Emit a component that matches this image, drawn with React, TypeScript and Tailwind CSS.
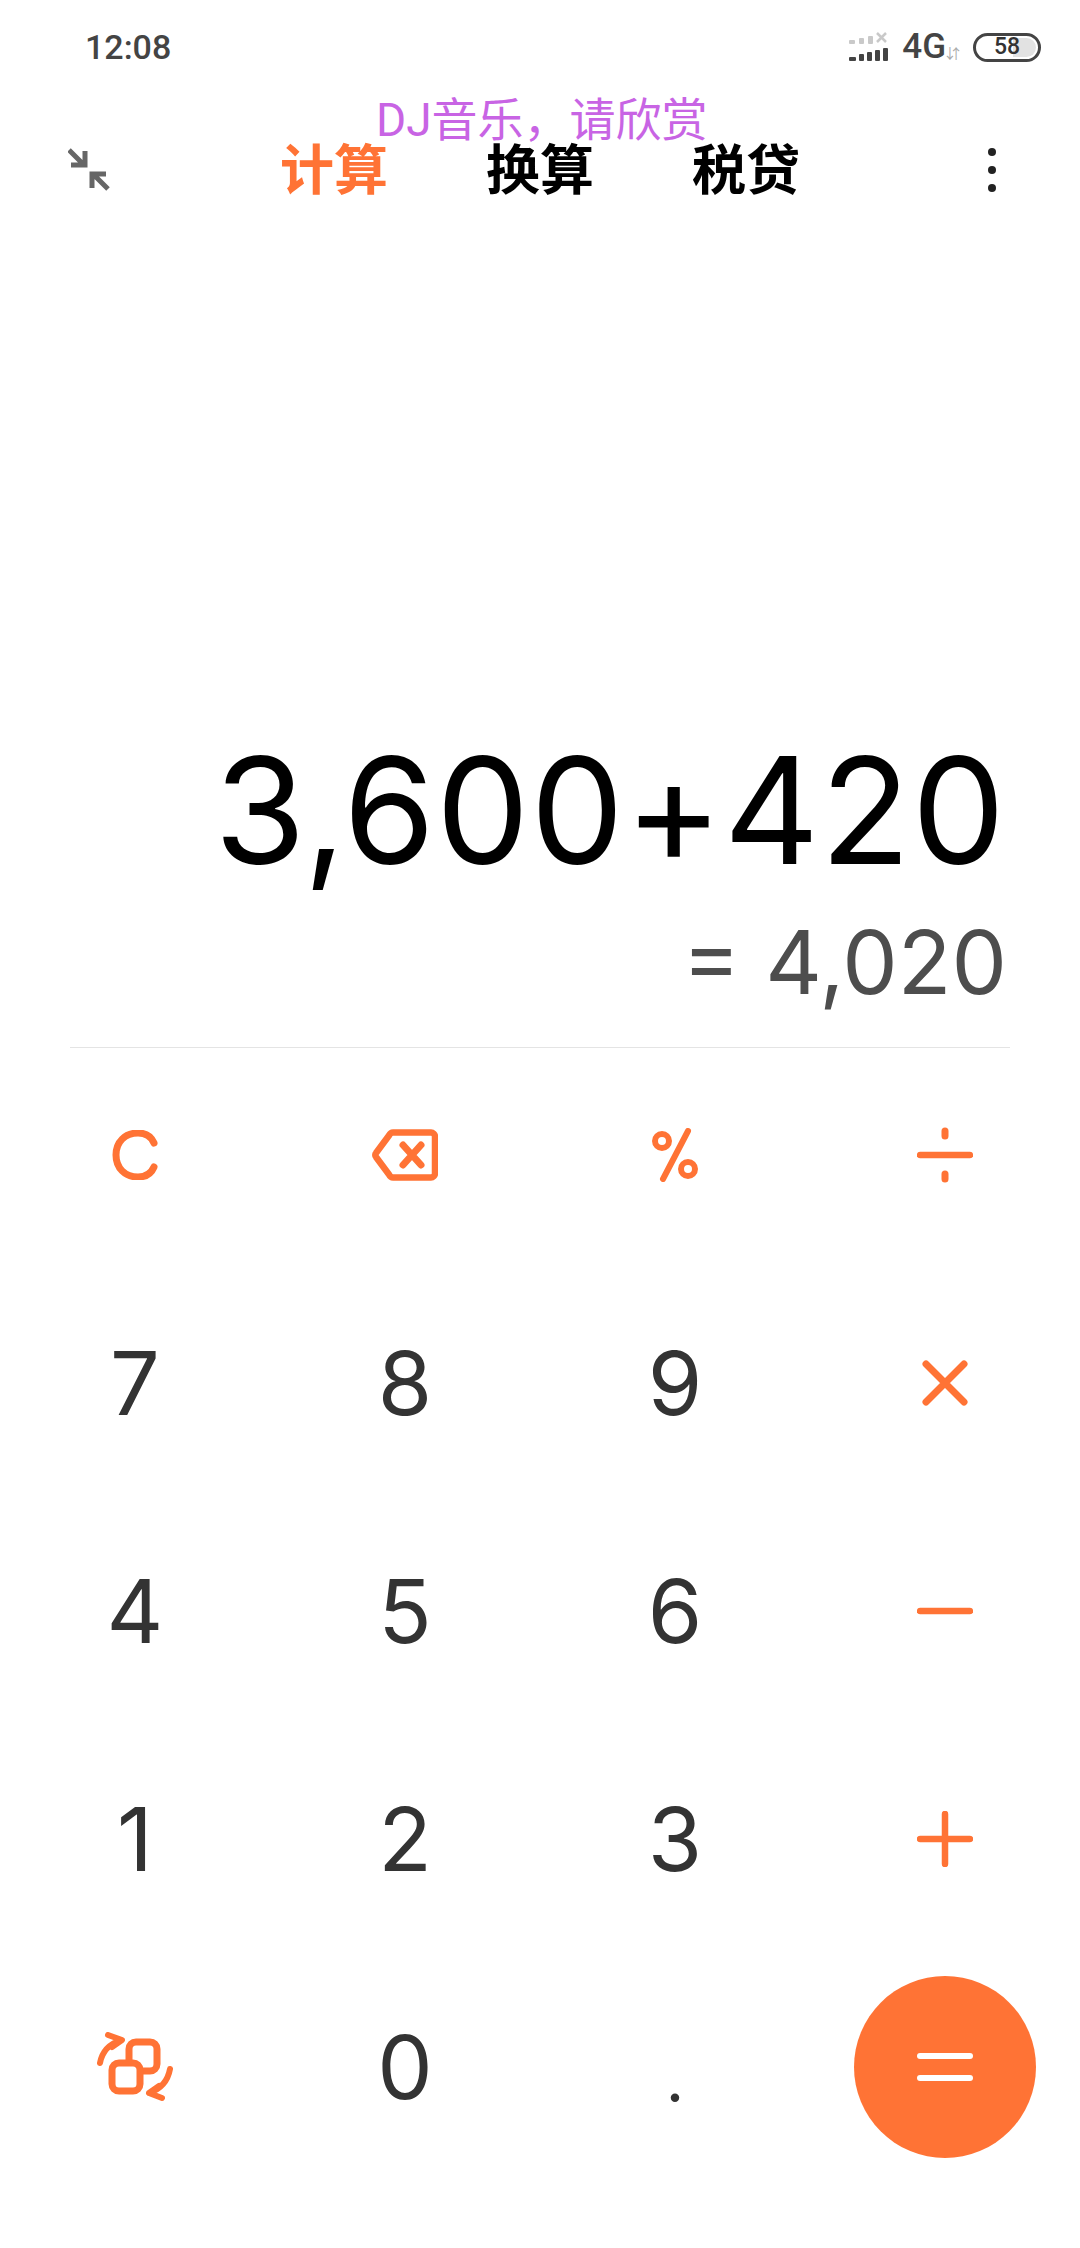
import type { ReactNode } from "react";

const ORANGE = "#ff7335";
const cjk = "font-['Roboto','Noto_Sans_CJK_SC',sans-serif]";

const Icon = ({ w, h, children }: { w: number; h: number; children: ReactNode }) => (
  <svg width={w} height={h} viewBox={`0 0 ${w} ${h}`} fill="none" stroke={ORANGE} strokeLinecap="round" strokeLinejoin="round">
    {children}
  </svg>
);

const ClearIcon = () => (
  <Icon w={46} h={50}>
    <path d="M42 13C39 6 33 3 26 3 13 3 4 12 4 25s9 22 22 22c7 0 13-3 16-10" strokeWidth={7} />
  </Icon>
);

const BackspaceIcon = () => (
  <Icon w={66} h={52}>
    <path d="M21 3.500h38c2 0 4 2 4 4v37c0 2-2 4-4 4H21c-2 0-3-1-4-3L4 28c-1-1-1-3 0-4L17 6.500c1-2 2-3 4-3z" strokeWidth={6.500} />
    <path d="M31 16l18 20M49 16L31 36" strokeWidth={7} />
  </Icon>
);

const PercentIcon = () => (
  <Icon w={46} h={54}>
    <path d="M36 3L11 51" strokeWidth={6} />
    <circle cx={10} cy={13} r={7} strokeWidth={6} />
    <circle cx={36} cy={41} r={7} strokeWidth={6} />
  </Icon>
);

const DivideIcon = () => (
  <Icon w={56} h={56}>
    <path d="M3 28h50" strokeWidth={6.500} />
    <path d="M28 4v5M28 47v5" strokeWidth={7} />
  </Icon>
);

const TimesIcon = () => (
  <Icon w={46} h={46}>
    <path d="M4 4l38 38M42 4L4 42" strokeWidth={7} />
  </Icon>
);

const MinusIcon = () => (
  <Icon w={56} h={8}>
    <path d="M3 4h50" strokeWidth={6.500} />
  </Icon>
);

const PlusIcon = () => (
  <Icon w={56} h={56}>
    <path d="M3 28h50M28 3v50" strokeWidth={6.500} />
  </Icon>
);

const SwapIcon = () => (
  <Icon w={76} h={70}>
    <rect x={32} y={10} width={28} height={29} rx={7} strokeWidth={7} />
    <rect x={15} y={31} width={28} height={28} rx={7} strokeWidth={7} fill="white" />
    <path d="M3 31C5 20 12 12 24 8M11 3l14 5-10 7" strokeWidth={6} />
    <path d="M73 37c-2 11-9 20-21 24M65 66l-13-5 10-7" strokeWidth={6} />
  </Icon>
);

const Signal = () => (
  <svg width={42} height={30} viewBox="0 0 42 30">
    <g fill="#c9c9c9">
      <rect x={1} y={8} width={6} height={4} rx={1} />
      <rect x={11} y={6} width={5} height={6} rx={1} />
      <rect x={20} y={4} width={5} height={8} rx={1} />
    </g>
    <path d="M29 1l9 9M38 1l-9 9" stroke="#c9c9c9" strokeWidth={2.500} />
    <g fill="#444">
      <rect x={1} y={25} width={7} height={4} rx={1} />
      <rect x={11} y={22} width={5} height={7} rx={1} />
      <rect x={19} y={20} width={5} height={9} rx={1} />
      <rect x={27} y={18} width={5} height={11} rx={1} />
      <rect x={35} y={16} width={5} height={13} rx={1} />
    </g>
  </svg>
);

const Digit = ({ value }: { value: string }) => (
  <span className="font-['Inter',sans-serif] text-[88px] leading-none font-normal text-[#333333]">{value}</span>
);

const keys: ReactNode[] = [
  <ClearIcon />,
  <BackspaceIcon />,
  <PercentIcon />,
  <DivideIcon />,
  <Digit value="7" />,
  <Digit value="8" />,
  <Digit value="9" />,
  <TimesIcon />,
  <Digit value="4" />,
  <Digit value="5" />,
  <Digit value="6" />,
  <MinusIcon />,
  <Digit value="1" />,
  <Digit value="2" />,
  <Digit value="3" />,
  <PlusIcon />,
  <SwapIcon />,
  <Digit value="0" />,
  <span className="font-['Inter',sans-serif] text-[64px] leading-none text-[#333333] mt-[24px]">.</span>,
  <div className="w-[182px] h-[182px] rounded-full bg-[#ff7335] flex flex-col items-center justify-center gap-4">
    <div className="w-14 h-1.5 rounded-sm bg-white" />
    <div className="w-14 h-1.5 rounded-sm bg-white" />
  </div>,
];

export default function App() {
  return (
    <div className={`w-[1080px] h-[2248px] bg-white flex flex-col overflow-hidden ${cjk}`}>
      <div className="h-[94px] pl-[85px] pr-[39px] flex items-center justify-between">
        <span className="text-[34px] font-medium text-[#444444]">12:08</span>
        <div className="flex items-center">
          <Signal />
          <span className="ml-[12px] text-[35px] font-medium text-[#444444]">4G</span>
          <span className="w-5 text-[14px] text-[#aaaaaa] mt-3">⇵</span>
          <div className="ml-[7px] w-[68px] h-[29px] rounded-full border-[3px] border-[#444444] p-[2px] flex">
            <div className="w-full rounded-full bg-[linear-gradient(90deg,#ffffff_60%,#e2e2e2_60%)] flex items-center justify-center">
              <span className="text-[23px] font-medium text-[#333333]">58</span>
            </div>
          </div>
        </div>
      </div>

      <div className="relative h-[154px] px-[68px] grid grid-cols-[1fr_auto_1fr] items-center">
        <span className="absolute left-[376px] top-[4px] text-[46px] leading-[44px] font-normal text-[#c864e4]">DJ音乐，请欣赏</span>
        <svg className="-mt-[3px]" width={44} height={44} viewBox="0 0 44 44" fill="none" stroke="#666666" strokeWidth={5}>
          <path d="M1 2l15 15M3 17h14V3" />
          <path d="M40 41L25 26M38 26H24v14" />
        </svg>
        <div className="mt-[2px] flex gap-[98px] text-[54px] leading-none font-bold text-black">
          <span className="text-[#ff7335]">计算</span>
          <span>换算</span>
          <span>税贷</span>
        </div>
        <div className="justify-self-end mr-4 -mt-[2px] flex flex-col gap-[10px]">
          <div className="w-2 h-2 rounded-full bg-[#222222]" />
          <div className="w-2 h-2 rounded-full bg-[#222222]" />
          <div className="w-2 h-2 rounded-full bg-[#222222]" />
        </div>
      </div>

      <div className="mx-[70px] h-[800px] border-b border-[#e4e4e4] flex flex-col items-end justify-end pb-[35px] font-['Inter',sans-serif]">
        <div className="mr-[4px] text-[148px] leading-[150px] tracking-[1px] text-black font-normal">3,600+420</div>
        <div className="mr-[3px] mt-[26px] text-[88px] leading-[100px] text-[#4d4d4d]">= 4,020</div>
      </div>

      <div className="-mt-[7px] grid grid-cols-4 auto-rows-[228px]">
        {keys.map((key, i) => (
          <div key={i} className="flex items-center justify-center">
            {key}
          </div>
        ))}
      </div>
    </div>
  );
}
